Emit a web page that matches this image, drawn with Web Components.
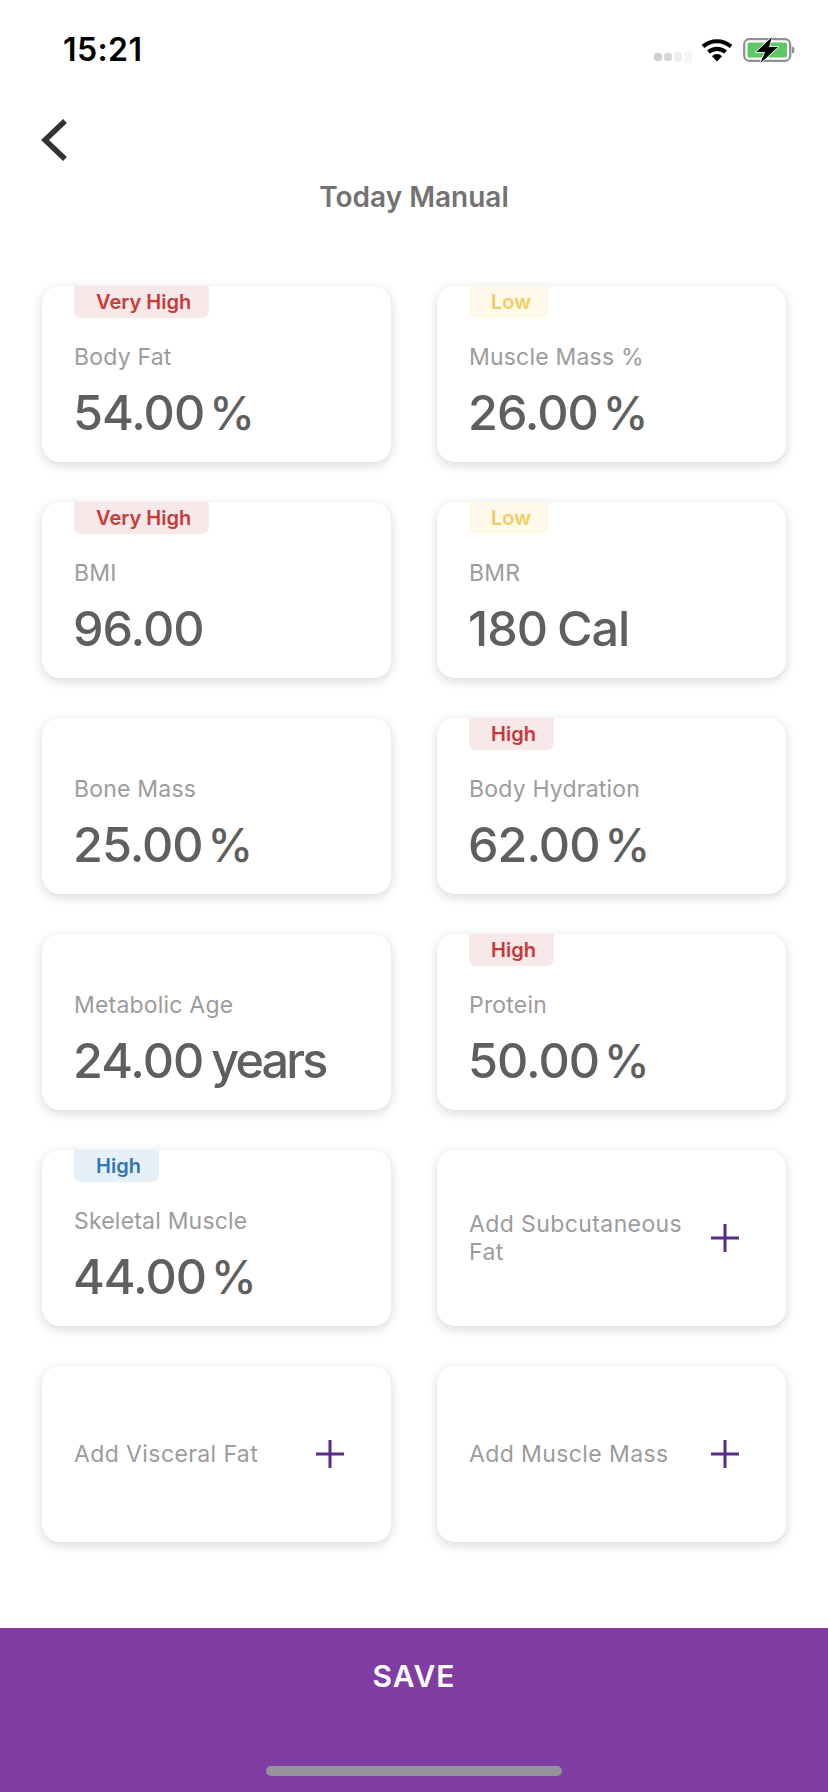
<!DOCTYPE html>
<html>
<head>
<meta charset="utf-8">
<style>
  html, body { margin: 0; padding: 0; background: #fff; }
  body { width: 828px; height: 1792px; overflow: hidden; font-family: Inter, "Noto Sans", sans-serif; }
  .page { display: flex; flex-direction: column; height: 1792px; }
  .grid { display: grid; grid-template-columns: 349px 349px; grid-auto-rows: 176px; column-gap: 46px; row-gap: 40px; padding: 0 42px; }
</style>
</head>
<body>
<div class="page">
  <status-bar time="15:21"></status-bar>
  <nav-header title="Today Manual"></nav-header>
  <div class="grid">
    <metric-card label="Body Fat" value="54.00 %" level="Very High" tone="red"></metric-card>
    <metric-card label="Muscle Mass %" value="26.00 %" level="Low" tone="yellow"></metric-card>
    <metric-card label="BMI" value="96.00" level="Very High" tone="red"></metric-card>
    <metric-card label="BMR" value="180 Cal" level="Low" tone="yellow"></metric-card>
    <metric-card label="Bone Mass" value="25.00 %"></metric-card>
    <metric-card label="Body Hydration" value="62.00 %" level="High" tone="red"></metric-card>
    <metric-card label="Metabolic Age" value="24.00 years"></metric-card>
    <metric-card label="Protein" value="50.00 %" level="High" tone="red"></metric-card>
    <metric-card label="Skeletal Muscle" value="44.00 %" level="High" tone="blue"></metric-card>
    <add-card>Add Subcutaneous Fat</add-card>
    <add-card>Add Visceral Fat</add-card>
    <add-card>Add Muscle Mass</add-card>
  </div>
  <save-bar>SAVE</save-bar>
</div>
<script>
class StatusBar extends HTMLElement {
  constructor() {
    super();
    this.attachShadow({mode: "open"});
  }
  connectedCallback() {
    this.shadowRoot.innerHTML = `
      <style>
        :host { display: flex; align-items: center; height: 100px; box-sizing: border-box; padding: 0 33px 0 63px; }
        .time { font-weight: 600; font-size: 32px; letter-spacing: .4px; color: #000; margin-right: auto; margin-top: -2px; }
        .signal { display: flex; align-items: center; gap: 2px; margin-right: 9px; margin-top: 13px; }
        .signal i { display: block; width: 8px; height: 8px; border-radius: 3px; }
        svg { display: block; }
      </style>
      <span class="time">${this.getAttribute("time")}</span>
      <div class="signal">
        <i style="background:#cfcfcf"></i>
        <i style="background:#d6d6d6"></i>
        <i style="background:#eeeeee;height:10px"></i>
        <i style="background:#f5f5f5;height:12px"></i>
      </div>
      <svg width="32" height="24" viewBox="0 0 32 24" style="margin-right:10px">
        <path d="M2 8.5C10 1.5 22 1.5 30 8.5" fill="none" stroke="#000" stroke-width="4.2"/>
        <path d="M7.5 14C12.5 9.8 19.5 9.8 24.5 14" fill="none" stroke="#000" stroke-width="4.2"/>
        <path d="M11 18.2C14 15.4 18 15.4 21 18.2L16 23.6Z" fill="#000"/>
      </svg>
      <svg width="52" height="26" viewBox="0 0 52 26">
        <rect x="1.2" y="2.2" width="46" height="21.6" rx="5" fill="#fff" stroke="#8f8f8f" stroke-width="2.2"/>
        <rect x="4.5" y="5.5" width="39.5" height="15" rx="2" fill="#5fc763"/>
        <path d="M48.8 9.5C50.8 10 51.5 11.2 51.5 13C51.5 14.8 50.8 16 48.8 16.5Z" fill="#8f8f8f"/>
        <path d="M29 0L13 15H22L17.5 26L35 10H26Z" fill="#000" stroke="#fff" stroke-width="1.6" stroke-linejoin="round" paint-order="stroke"/>
      </svg>`;
  }
}

class NavHeader extends HTMLElement {
  constructor() {
    super();
    this.attachShadow({mode: "open"});
  }
  connectedCallback() {
    this.shadowRoot.innerHTML = `
      <style>
        :host { display: block; height: 186px; box-sizing: border-box; padding: 18px 0 0 39px; }
        svg { display: block; }
        h1 { margin: 17px 0 0 -39px; text-align: center; font-size: 28px; line-height: 36px; font-weight: 600; color: #737373; }
      </style>
      <svg width="30" height="44" viewBox="0 0 30 44">
        <path d="M26 3L6 22L26 41" fill="none" stroke="#333" stroke-width="5.5"/>
      </svg>
      <h1>${this.getAttribute("title")}</h1>`;
  }
}

class MetricCard extends HTMLElement {
  constructor() {
    super();
    this.attachShadow({mode: "open"});
  }
  connectedCallback() {
    const level = this.getAttribute("level");
    const tone = this.getAttribute("tone");
    const [num, unit] = this.getAttribute("value").split(" ");
    const unitClass = unit === "%" ? "pct" : unit === "years" ? "yrs" : "";
    this.shadowRoot.innerHTML = `
      <style>
        :host { display: block; position: relative; box-sizing: border-box; padding: 56px 32px 0 32px; background: #fff; border-radius: 18px; box-shadow: 0 3px 11px rgba(0,0,0,.16); }
        .badge { position: absolute; left: 32px; top: 0; height: 32px; padding: 0 18px 0 22px; border-radius: 0 0 7px 7px; font-size: 20px; line-height: 32px; font-weight: 600; }
        .red { background: #f7e8e9; color: #c73a3a; }
        .yellow { background: #fef9e8; color: #f3cd62; }
        .blue { background: #e5f0f8; color: #3374b5; }
        .label { font-size: 23px; line-height: 30px; color: #9c9c9c; letter-spacing: .2px; }
        .value { margin: 11px 0 0 -1px; font-size: 48.5px; line-height: 60px; font-weight: 500; color: #5f5f5f; letter-spacing: -1px; word-spacing: -2px; white-space: nowrap; }
        .value.pct { word-spacing: -7px; }
        .value.pct span { font-size: 46px; }
        .value.yrs { word-spacing: -4px; }
        .value.yrs span { letter-spacing: -2.8px; }
      </style>
      ${level ? `<span class="badge ${tone}">${level}</span>` : ""}
      <div class="label">${this.getAttribute("label")}</div>
      <div class="value ${unitClass}">${num}${unit ? ` <span>${unit}</span>` : ""}</div>`;
  }
}

class AddCard extends HTMLElement {
  constructor() {
    super();
    this.attachShadow({mode: "open"});
  }
  connectedCallback() {
    this.shadowRoot.innerHTML = `
      <style>
        :host { display: flex; align-items: center; box-sizing: border-box; padding: 0 47px 0 32px; background: #fff; border-radius: 18px; box-shadow: 0 3px 11px rgba(0,0,0,.16); }
        .text { flex: 1; font-size: 23px; line-height: 28px; color: #9c9c9c; letter-spacing: .4px; padding-right: 20px; }
        svg { display: block; flex: none; }
      </style>
      <div class="text"><slot></slot></div>
      <svg width="28" height="28" viewBox="0 0 28 28">
        <path d="M14 0V28M0 14H28" fill="none" stroke="#5b2a86" stroke-width="3"/>
      </svg>`;
  }
}

class SaveBar extends HTMLElement {
  constructor() {
    super();
    this.attachShadow({mode: "open"});
  }
  connectedCallback() {
    this.shadowRoot.innerHTML = `
      <style>
        :host { display: flex; flex-direction: column; align-items: center; margin-top: auto; height: 164px; box-sizing: border-box; padding-top: 30px; background: #803da4; }
        .label { font-size: 30px; line-height: 36px; font-weight: 600; color: #fff; letter-spacing: 1px; }
        .home { width: 296px; height: 10px; border-radius: 5px; background: #969498; margin-top: auto; margin-bottom: 16px; }
      </style>
      <div class="label"><slot></slot></div>
      <div class="home"></div>`;
  }
}

customElements.define("status-bar", StatusBar);
customElements.define("nav-header", NavHeader);
customElements.define("metric-card", MetricCard);
customElements.define("add-card", AddCard);
customElements.define("save-bar", SaveBar);
</script>
</body>
</html>
